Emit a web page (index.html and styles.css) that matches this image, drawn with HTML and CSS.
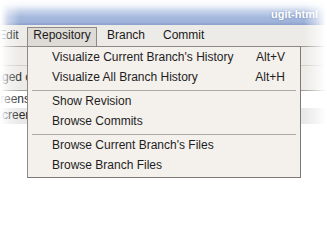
FILE: index.html
```html
<!DOCTYPE html>
<html>
<head>
<meta charset="utf-8">
<link rel="stylesheet" href="styles.css">
</head>
<body>
<div class="screen">
  <div class="titlebar"><span class="title">ugit-html</span></div>
  <div class="menubar">
    <span class="mitem edit">Edit</span>
    <span class="mitem active">Repository</span>
    <span class="mitem branch">Branch</span>
    <span class="mitem">Commit</span>
  </div>
  <div class="content">
    <div class="toolbar"></div>
    <div class="label"><span class="label-text">Staged changes</span></div>
    <div class="row r1"><span class="row-text">screenshot.png</span></div>
    <div class="row r2"><span class="row-text">screencast.ogv</span></div>
  </div>
  <div class="dropdown">
    <div class="item"><span>Visualize Current Branch's History</span><span>Alt+V</span></div>
    <div class="item"><span>Visualize All Branch History</span><span>Alt+H</span></div>
    <div class="sep"></div>
    <div class="item"><span>Show Revision</span></div>
    <div class="item"><span>Browse Commits</span></div>
    <div class="sep"></div>
    <div class="item"><span>Browse Current Branch's Files</span></div>
    <div class="item"><span>Browse Branch Files</span></div>
  </div>
  <div class="fade fade-top"></div>
  <div class="fade fade-left"></div>
  <div class="fade fade-right"></div>
</div>
</body>
</html>
```
FILE: styles.css
```css
html, body {
  margin: 0;
  padding: 0;
  background: #ffffff;
}
body {
  width: 327px;
  height: 205px;
  overflow: hidden;
  font-family: "Liberation Sans", Arial, sans-serif;
  font-size: 12px;
  color: #1c1c1c;
}
.screen {
  position: relative;
  width: 327px;
  height: 205px;
  overflow: hidden;
  background: #ffffff;
}
.titlebar {
  height: 25px;
  box-sizing: border-box;
  background: linear-gradient(to bottom, #c2d0ea 0px, #aabde0 14px, #9fb3da 22px, #8a9fca 25px);
  display: flex;
  justify-content: flex-end;
  align-items: center;
  padding: 3px 9px 0 0;
}
.title {
  color: #ffffff;
  font-weight: bold;
  font-size: 11px;
  text-shadow: 0 0 2px rgba(70, 95, 150, 0.7);
}
.menubar {
  height: 21px;
  background: #edebe8;
  display: flex;
  align-items: flex-start;
}
.mitem {
  margin-top: 2px;
  height: 20px;
  box-sizing: border-box;
  border: 1px solid transparent;
  line-height: 14px;
  padding: 0 8px;
  white-space: nowrap;
  color: #1a1a1a;
}
.edit {
  width: 30px;
  margin-left: -3px;
  padding: 0;
}
.active {
  width: 70px;
  padding: 0;
  text-align: center;
  background: #dedbd6;
  border-color: #8d8a86;
}
.branch {
  margin-left: 1px;
}
.content {
  border-top: 1px solid #9c9995;
}
.toolbar {
  height: 18px;
  background: #edebe8;
  border-bottom: 1px solid #d2cfcb;
}
.label {
  height: 24px;
  line-height: 22px;
  background: #edebe8;
  border-bottom: 1px solid #a3a09c;
  white-space: nowrap;
}
.label-text {
  margin-left: -16px;
  color: #2a2a2a;
}
.row {
  white-space: nowrap;
  color: #2a2a2a;
}
.r1 {
  height: 17px;
  line-height: 17px;
  background: #ffffff;
}
.r1 .row-text {
  margin-left: -12px;
}
.r2 {
  height: 16px;
  line-height: 15px;
  background: #e9e9e9;
}
.r2 .row-text {
  margin-left: -4px;
}
.dropdown {
  position: absolute;
  left: 27px;
  top: 46px;
  width: 274px;
  box-sizing: border-box;
  background: #f4f0ec;
  border: 1px solid #8c8986;
  border-right-color: #7c7976;
  border-bottom-color: #7c7976;
  padding: 0 0 2px 0;
}
.item {
  height: 20px;
  line-height: 20px;
  display: flex;
  justify-content: space-between;
  padding: 0 15px 0 24px;
  white-space: nowrap;
  color: #1e1e1e;
}
.sep {
  margin: 3px 4px 0 4px;
  border-top: 1px solid #aca8a4;
}
.fade {
  position: absolute;
  pointer-events: none;
}
.fade-top {
  left: 0;
  top: 0;
  width: 327px;
  height: 17px;
  background: linear-gradient(to bottom, rgba(255,255,255,1) 0px, rgba(255,255,255,0.85) 5px, rgba(255,255,255,0.3) 11px, rgba(255,255,255,0) 17px);
}
.fade-left {
  left: 0;
  top: 0;
  width: 20px;
  height: 205px;
  background: linear-gradient(to right, rgba(255,255,255,1) 0px, rgba(255,255,255,0.85) 3px, rgba(255,255,255,0.45) 8px, rgba(255,255,255,0) 20px);
}
.fade-right {
  left: 304px;
  top: 0;
  width: 23px;
  height: 205px;
  background: linear-gradient(to right, rgba(255,255,255,0) 0px, rgba(255,255,255,0.5) 12px, rgba(255,255,255,1) 22px);
}
```
